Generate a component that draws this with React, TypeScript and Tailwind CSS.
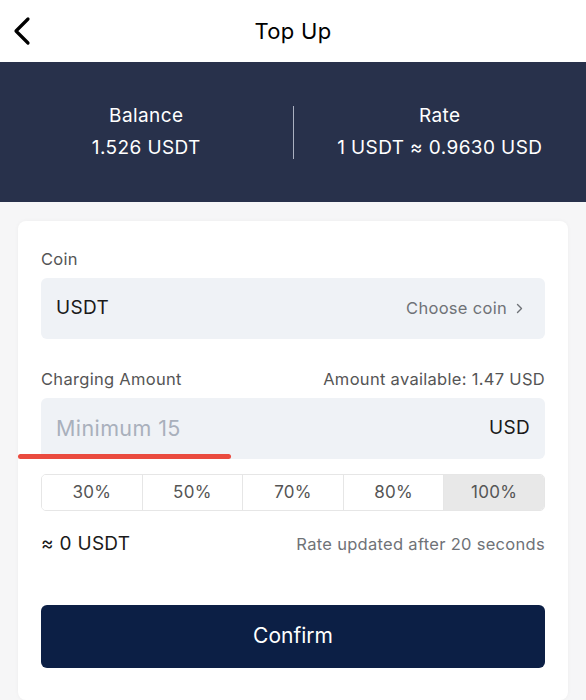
const FONT = { fontFamily: "Inter, 'Liberation Sans', sans-serif" };

const PERCENTS = ["30%", "50%", "70%", "80%", "100%"];

export default function App() {
  return (
    <div className="min-h-[700px] bg-[#f6f6f7] text-[#1a1a1a]" style={FONT}>
      {/* header */}
      <div className="relative flex h-[62px] items-center justify-center bg-white">
        <button className="absolute left-[11px] top-[16px]">
          <svg width="22" height="30" viewBox="0 0 22 30" fill="none">
            <path d="M17 3 L5 15 L17 27" stroke="#000" strokeWidth="3.2" strokeLinecap="round" strokeLinejoin="round" />
          </svg>
        </button>
        <h1 className="text-[22px] font-normal tracking-[0.3px] text-black">Top Up</h1>
      </div>

      {/* summary band */}
      <div className="flex h-[140px] items-center bg-[#28314b] text-white">
        <div className="flex flex-1 flex-col items-center gap-[10px]">
          <span className="text-[19px] leading-[22px] tracking-[0.4px]">Balance</span>
          <span className="text-[19px] leading-[22px] tracking-[0.4px]">1.526 USDT</span>
        </div>
        <div className="h-[53px] w-px bg-[#aab0c0]" />
        <div className="flex flex-1 flex-col items-center gap-[10px]">
          <span className="text-[19px] leading-[22px] tracking-[0.4px]">Rate</span>
          <span className="text-[19px] leading-[22px] tracking-[0.4px]">1 USDT ≈ 0.9630 USD</span>
        </div>
      </div>

      {/* form card */}
      <div className="px-[18px] pt-[19px]">
        <div className="rounded-[8px] bg-white px-[23px] pb-[32px] pt-[28px] shadow-[0_0_4px_rgba(0,0,0,0.04)]">
          <div className="text-[16.5px] leading-[20px] tracking-[0.3px] text-[#555]">Coin</div>
          <div className="mt-[9px] flex h-[61px] items-center justify-between rounded-[6px] bg-[#eff2f6] pl-[15px] pr-[22px]">
            <span className="text-[19px] tracking-[0.3px] text-[#1a1a1a]">USDT</span>
            <span className="flex items-center gap-[9px] text-[16.5px] tracking-[0.3px] text-[#6f7277]">
              Choose coin
              <svg width="7" height="11" viewBox="0 0 7 11" fill="none">
                <path d="M1.5 1.5 L5.5 5.5 L1.5 9.5" stroke="#6f7277" strokeWidth="1.4" strokeLinecap="round" strokeLinejoin="round" />
              </svg>
            </span>
          </div>

          <div className="mt-[30px] flex items-center justify-between text-[16.5px] leading-[20px] tracking-[0.3px] text-[#555]">
            <span>Charging Amount</span>
            <span>Amount available: 1.47 USD</span>
          </div>
          <div className="relative mt-[9px]">
            <div className="flex h-[61px] items-center justify-between rounded-[6px] bg-[#eff2f6] pl-[15px] pr-[15px]">
              <span className="text-[21.5px] tracking-[0.4px] text-[#a9b0bc]">Minimum 15</span>
              <span className="text-[19px] tracking-[0.3px] text-[#1a1a1a]">USD</span>
            </div>
            <div className="absolute left-[-23px] top-[56px] h-[5px] w-[213px] rounded-full bg-[#ea4b3f]" />
          </div>

          <div className="mt-[15px] flex h-[37px] overflow-hidden rounded-[5px] border border-[#e6e6e6]">
            {PERCENTS.map((p, i) => (
              <div
                key={p}
                className={`flex flex-1 items-center justify-center text-[17px] tracking-[0.3px] text-[#555] ${
                  i > 0 ? "border-l border-[#e6e6e6]" : ""
                } ${i === PERCENTS.length - 1 ? "bg-[#e8e8e8] text-[#333]" : "bg-white"}`}
              >
                {p}
              </div>
            ))}
          </div>

          <div className="mt-[19px] flex items-center justify-between">
            <span className="text-[19px] tracking-[0.3px] text-[#1a1a1a]">≈ 0 USDT</span>
            <span className="text-[16.5px] tracking-[0.3px] text-[#6f7277]">Rate updated after 20 seconds</span>
          </div>

          <button className="mt-[46px] flex h-[63px] w-full items-center justify-center rounded-[6px] bg-[#0c1f45] text-[21px] text-white">
            Confirm
          </button>
        </div>
      </div>
    </div>
  );
}
